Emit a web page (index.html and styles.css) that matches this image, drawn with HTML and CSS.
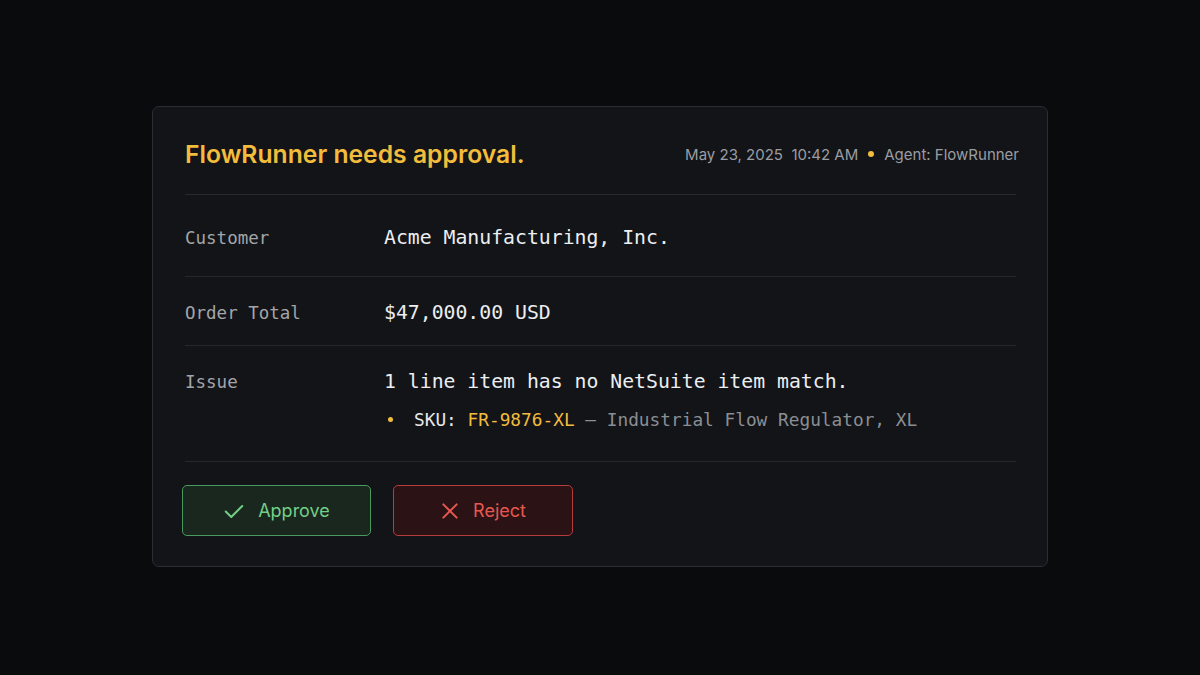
FILE: index.html
```html
<!DOCTYPE html>
<html lang="en">
<head>
<meta charset="UTF-8">
<meta name="viewport" content="width=device-width, initial-scale=1.0">
<title>Approval Request</title>
<link rel="stylesheet" href="styles.css">
</head>
<body>
<div class="card">
  <div class="card-header">
    <h1 class="title">FlowRunner needs approval.</h1>
    <div class="meta">
      <span>May 23, 2025&nbsp;&nbsp;10:42 AM</span>
      <span class="dot"></span>
      <span>Agent: FlowRunner</span>
    </div>
  </div>

  <div class="row row-first">
    <div class="label">Customer</div>
    <div class="value">Acme Manufacturing, Inc.</div>
  </div>
  <div class="row">
    <div class="label">Order Total</div>
    <div class="value">$47,000.00 USD</div>
  </div>
  <div class="row row-issue">
    <div class="label">Issue</div>
    <div class="value">
      <div>1 line item has no NetSuite item match.</div>
      <ul class="sku-list">
        <li><span class="sku-key">SKU:</span> <span class="sku">FR-9876-XL</span> <span class="muted">&ndash; Industrial Flow Regulator, XL</span></li>
      </ul>
    </div>
  </div>

  <div class="actions">
    <button class="btn btn-approve">
      <svg width="22" height="22" viewBox="0 0 24 24" fill="none" stroke="currentColor" stroke-width="2.2" stroke-linecap="round" stroke-linejoin="round"><path d="M3 12.5l6 6L21 6.5"/></svg>
      Approve
    </button>
    <button class="btn btn-reject">
      <svg width="20" height="20" viewBox="0 0 24 24" fill="none" stroke="currentColor" stroke-width="2.4" stroke-linecap="round"><path d="M4 4l16 16M20 4L4 20"/></svg>
      Reject
    </button>
  </div>
</div>
</body>
</html>
```

FILE: styles.css
```css
body {
  margin: 0;
  height: 100vh;
  background-color: #0a0b0d;
  font-family: Inter, "Noto Sans", sans-serif;
  display: flex;
  justify-content: center;
  align-items: flex-start;
}
.card {
  margin-top: 106px;
  width: 831px;
  background-color: #121418;
  border: 1px solid #2b2e33;
  border-radius: 7px;
  padding: 31px 31px 30px 32px;
}
.card-header {
  display: flex;
  justify-content: space-between;
  align-items: center;
  height: 32px;
  padding-bottom: 24px;
  border-bottom: 1px solid #272a2f;
}
.title {
  margin: 0;
  font-size: 24.7px;
  font-weight: 600;
  color: #f2bc3c;
}
.meta {
  display: flex;
  align-items: center;
  gap: 9px;
  margin-right: -3px;
  font-size: 15px;
  color: #9b9da2;
}
.dot {
  width: 6px;
  height: 6px;
  margin: 0 1px;
  border-radius: 50%;
  background-color: #f2bc3c;
}
.row {
  display: flex;
  padding: 24px 0 20px;
  border-bottom: 1px solid #24272b;
  font-family: "DejaVu Sans Mono", "Liberation Mono", monospace;
  line-height: 24px;
}
.row-first {
  padding: 31px 0 26px;
}
.row-issue {
  padding: 24px 0 29px;
}
.label {
  width: 199px;
  flex-shrink: 0;
  font-size: 17.5px;
  color: #a3a5a9;
}
.value {
  font-size: 19.8px;
  color: #eceef0;
}
.sku-list {
  list-style: none;
  margin: 14px 0 0;
  padding: 0;
  font-size: 17.8px;
}
.sku-list li::before {
  content: "";
  display: inline-block;
  vertical-align: middle;
  width: 5px;
  height: 5px;
  border-radius: 50%;
  background-color: #f2bc3c;
  margin: 0 21px 3px 4px;
}
.sku-key {
  color: #e6e8ea;
}
.sku {
  color: #f2bc3c;
}
.muted {
  color: #8b8e93;
}
.actions {
  display: flex;
  gap: 22px;
  margin-top: 23px;
  margin-left: -3px;
}
.btn {
  display: flex;
  align-items: center;
  justify-content: center;
  gap: 13px;
  height: 51px;
  border-radius: 5px;
  font-family: Inter, "Noto Sans", sans-serif;
  font-size: 18px;
  font-weight: 400;
  cursor: pointer;
}
.btn-approve {
  width: 189px;
  background-color: #19271f;
  border: 1px solid #4b9a5d;
  color: #74cf86;
}
.btn-reject {
  width: 180px;
  background-color: #2b1315;
  border: 1px solid #b63b3c;
  color: #e8574f;
}
```
